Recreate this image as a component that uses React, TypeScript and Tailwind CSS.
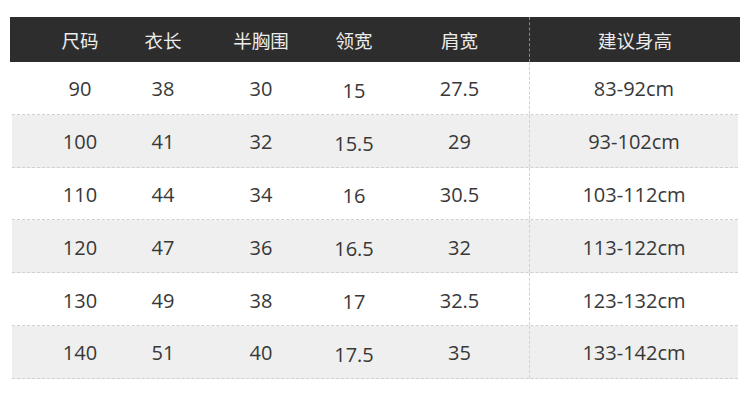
const headers = ['尺码', '衣长', '半胸围', '领宽', '肩宽', '建议身高']

const rows = [
  ['90', '38', '30', '15', '27.5', '83-92cm'],
  ['100', '41', '32', '15.5', '29', '93-102cm'],
  ['110', '44', '34', '16', '30.5', '103-112cm'],
  ['120', '47', '36', '16.5', '32', '113-122cm'],
  ['130', '49', '38', '17', '32.5', '123-132cm'],
  ['140', '51', '40', '17.5', '35', '133-142cm'],
]

const font = { fontFamily: '"Open Sans", "Noto Sans CJK SC", sans-serif' }

export default function App() {
  return (
    <div className="h-[402px] w-[750px] bg-white pl-[10px] pt-[17px]" style={font}>
      <div className="w-[730px]">
        <div className="grid h-[45px] grid-cols-[28px_84px_82px_114px_72px_139px_211px] bg-[#2d2d2d] text-[18.5px] text-[#ececec]">
          <div />
          {headers.map((h, i) => (
            <div
              key={h}
              className={[
                'flex items-center justify-center pt-[3px]',
                i === 5 ? 'border-l border-dashed border-[#8c8c8c]' : '',
              ].join(' ')}
              style={{ fontFamily: '"Noto Sans CJK SC", sans-serif' }}
            >
              {h}
            </div>
          ))}
        </div>

        <div className="mx-[2px]">
          {rows.map((r, ri) => (
            <div
              key={r[0]}
              className={[
                'grid h-[52.8px] grid-cols-[26px_84px_82px_114px_72px_139px_209px] border-b border-dashed border-[#d0d0d0] text-[20px] text-[#383838]',
                ri % 2 === 1 ? 'bg-[#efefef]' : 'bg-white',
              ].join(' ')}
            >
              <div />
              {r.map((v, i) => (
                <div
                  key={i}
                  className={[
                    'flex items-center justify-center',
                    i === 3 ? 'pt-[6px]' : 'pt-[3px]',
                    i === 5 ? 'border-l border-dashed border-[#d0d0d0]' : '',
                  ].join(' ')}
                >
                  {v}
                </div>
              ))}
            </div>
          ))}
        </div>
      </div>
    </div>
  )
}
